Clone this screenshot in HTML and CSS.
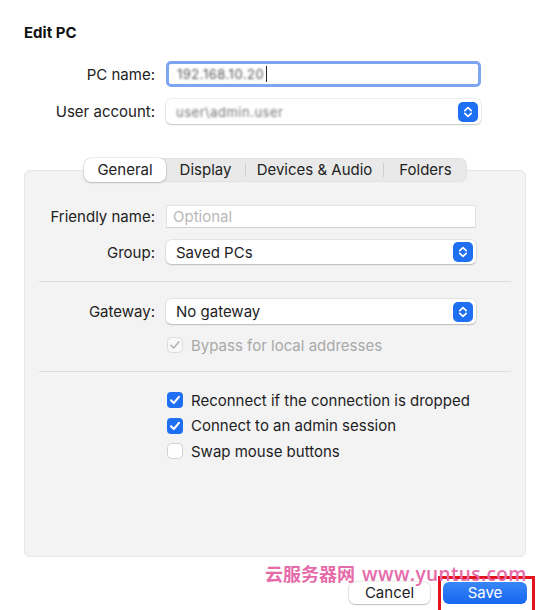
FILE: index.html
```html
<!DOCTYPE html>
<html>
<head>
<meta charset="utf-8">
<link rel="stylesheet" href="styles.css">
</head>
<body>
<div class="dialog">
  <h1 class="title">Edit PC</h1>

  <div class="form top-form">
    <label class="label">PC name:</label>
    <div class="field focused"><span class="blurred">192.168.10.20</span><span class="caret"></span></div>

    <label class="label">User account:</label>
    <div class="select"><span class="blurred light">user\admin.user</span>
      <svg class="stepper" width="20" height="20" viewBox="0 0 20 20"><rect x="0" y="0" width="20" height="20" rx="5" fill="#1f6ff2"/><path d="M6.8 8.6 L10 5.6 L13.2 8.6 M6.8 11.4 L10 14.4 L13.2 11.4" fill="none" stroke="#fff" stroke-width="1.7" stroke-linecap="round" stroke-linejoin="round"/></svg>
    </div>
  </div>

  <div class="tabs">
    <span class="tab active">General</span>
    <span class="tab">Display</span>
    <span class="sep-v"></span>
    <span class="tab">Devices &amp; Audio</span>
    <span class="sep-v"></span>
    <span class="tab">Folders</span>
  </div>

  <div class="panel">
    <div class="form panel-form">
      <label class="label">Friendly name:</label>
      <div class="field plain"><span class="placeholder">Optional</span></div>

      <label class="label">Group:</label>
      <div class="select"><span>Saved PCs</span>
        <svg class="stepper" width="20" height="20" viewBox="0 0 20 20"><rect x="0" y="0" width="20" height="20" rx="5" fill="#1f6ff2"/><path d="M6.8 8.6 L10 5.6 L13.2 8.6 M6.8 11.4 L10 14.4 L13.2 11.4" fill="none" stroke="#fff" stroke-width="1.7" stroke-linecap="round" stroke-linejoin="round"/></svg>
      </div>
    </div>

    <div class="divider first"></div>

    <div class="form panel-form">
      <label class="label">Gateway:</label>
      <div class="select gw"><span>No gateway</span>
        <svg class="stepper" width="20" height="20" viewBox="0 0 20 20"><rect x="0" y="0" width="20" height="20" rx="5" fill="#1f6ff2"/><path d="M6.8 8.6 L10 5.6 L13.2 8.6 M6.8 11.4 L10 14.4 L13.2 11.4" fill="none" stroke="#fff" stroke-width="1.7" stroke-linecap="round" stroke-linejoin="round"/></svg>
      </div>
      <span></span>
      <div class="check disabled">
        <svg class="box" width="16" height="16" viewBox="0 0 16 16"><rect x="0.5" y="0.5" width="15" height="15" rx="4" fill="#f8f8f8" stroke="#dcdcdc"/><path d="M4 8.3 L6.8 11 L12 4.8" fill="none" stroke="#b4b4b4" stroke-width="1.6" stroke-linecap="round" stroke-linejoin="round"/></svg>
        <span>Bypass for local addresses</span>
      </div>
    </div>

    <div class="divider second"></div>

    <div class="checks">
      <div class="check">
        <svg class="box" width="16" height="16" viewBox="0 0 16 16"><rect x="0" y="0" width="16" height="16" rx="4" fill="#1f6ff2"/><path d="M4 8.3 L6.8 11 L12 4.8" fill="none" stroke="#fff" stroke-width="2" stroke-linecap="round" stroke-linejoin="round"/></svg>
        <span>Reconnect if the connection is dropped</span>
      </div>
      <div class="check">
        <svg class="box" width="16" height="16" viewBox="0 0 16 16"><rect x="0" y="0" width="16" height="16" rx="4" fill="#1f6ff2"/><path d="M4 8.3 L6.8 11 L12 4.8" fill="none" stroke="#fff" stroke-width="2" stroke-linecap="round" stroke-linejoin="round"/></svg>
        <span>Connect to an admin session</span>
      </div>
      <div class="check">
        <svg class="box" width="16" height="16" viewBox="0 0 16 16"><rect x="0.5" y="0.5" width="15" height="15" rx="4" fill="#fff" stroke="#d2d2d2"/></svg>
        <span>Swap mouse buttons</span>
      </div>
    </div>
  </div>

  <div class="buttons">
    <button class="btn cancel">Cancel</button>
    <button class="btn save">Save</button>
  </div>

  <div class="watermark">云服务器网 <span class="wm-url">www.yuntus.com</span></div>
</div>
</body>
</html>
```

FILE: styles.css
```css
html, body {
  margin: 0;
  padding: 0;
  background: #ffffff;
}

body {
  font-family: Inter, "Noto Sans", "Liberation Sans", sans-serif;
  font-size: 15px;
  color: #1d1d1f;
  width: 550px;
  height: 610px;
  overflow: hidden;
}

.dialog {
  position: relative;
  padding: 23px 24px 0 24px;
  height: 610px;
  box-sizing: border-box;
}

.title {
  margin: 0;
  font-size: 15px;
  font-weight: 700;
  line-height: 20px;
  color: #111;
}

.form {
  display: grid;
  align-items: center;
  column-gap: 11px;
}

.top-form {
  margin-top: 18px;
  grid-template-columns: 131px 315px;
  row-gap: 12px;
}

.label {
  text-align: right;
  color: #222;
  white-space: nowrap;
}

.field {
  box-sizing: border-box;
  background: #fff;
  display: flex;
  align-items: center;
  padding-left: 8px;
}

.field.focused {
  height: 26px;
  border: 3px solid #7ea6f0;
  border-radius: 5px;
}

.field.plain {
  height: 23px;
  border: 1px solid #e2e2e2;
  border-bottom-color: #cfcfcf;
  padding-left: 6px;
}

.placeholder {
  color: #b8b8b8;
}

.blurred {
  color: #555;
  font-size: 13px;
  filter: blur(1.2px);
  letter-spacing: 0.5px;
}

.blurred.light {
  color: #777;
}

.caret {
  display: inline-block;
  width: 1px;
  height: 16px;
  background: #222;
  margin-left: 2px;
}

.select {
  box-sizing: border-box;
  height: 25px;
  background: #fff;
  border-radius: 5px;
  box-shadow: 0 0 0 0.5px rgba(0,0,0,0.12), 0 1px 1.5px rgba(0,0,0,0.18);
  display: flex;
  align-items: center;
  justify-content: space-between;
  padding: 0 3px 0 10px;
}

.panel-form .select {
  height: 24px;
}

.panel-form .select.gw {
  height: 25px;
}

.stepper {
  display: block;
  flex: none;
}

.tabs {
  margin-top: 34px;
  margin-bottom: -12px;
  position: relative;
  z-index: 1;
  display: flex;
  align-items: center;
  width: 383px;
  height: 24px;
  margin-left: 60px;
  background: #e9e9e9;
  border-radius: 7px;
  box-shadow: inset 0 0 0 0.5px rgba(0,0,0,0.06);
}

.tab {
  height: 24px;
  line-height: 24px;
  text-align: center;
  color: #222;
}

.tab:nth-child(1) { width: 82px; }
.tab:nth-child(2) { width: 79px; }
.tab:nth-child(4) { width: 137px; }
.tab:nth-child(6) { flex: 1; }

.tab.active {
  background: #fff;
  border-radius: 7px;
  box-shadow: 0 0 0 0.5px rgba(0,0,0,0.14), 0 1px 2px rgba(0,0,0,0.18);
}

.sep-v {
  width: 1px;
  height: 14px;
  background: #cfcfcf;
}

.panel {
  box-sizing: border-box;
  height: 387px;
  background: #f3f3f3;
  border: 1px solid #e6e6e6;
  border-radius: 6px;
  padding-top: 34px;
}

.panel-form {
  grid-template-columns: 130px 310px;
  row-gap: 12px;
}

.divider {
  height: 1px;
  background: #dcdcdc;
  margin: 0 14px;
}

.divider.first {
  margin-top: 17px;
  margin-bottom: 17px;
}

.divider.second {
  margin-top: 17px;
  margin-bottom: 18px;
}

.check {
  display: flex;
  align-items: center;
  gap: 8px;
  height: 20px;
  padding-left: 1px;
}

.check.disabled {
  color: #a9a9a9;
  height: 18px;
}

.box {
  display: block;
  flex: none;
}

.checks {
  margin-left: 141px;
  display: flex;
  flex-direction: column;
  gap: 5.5px;
}

.buttons {
  display: flex;
  justify-content: flex-end;
  gap: 13px;
  margin-top: 25px;
  margin-right: -1px;
}

.btn {
  font-family: inherit;
  font-size: 15px;
  height: 22px;
  border: none;
  border-radius: 6px;
  padding: 0;
  line-height: 22px;
}

.btn.cancel {
  width: 81px;
  background: #fff;
  color: #1d1d1f;
  box-shadow: 0 0 0 0.5px rgba(0,0,0,0.16), 0 1px 1.5px rgba(0,0,0,0.2);
}

.btn.save {
  position: relative;
  width: 84px;
  background: linear-gradient(#3a86f8, #1666f0);
  color: #fff;
}

.btn.save::after {
  content: "";
  position: absolute;
  left: -5px;
  right: -8px;
  top: -6px;
  bottom: -10px;
  border: 3px solid #e2131c;
  pointer-events: none;
}

.watermark {
  position: absolute;
  left: 265px;
  top: 562px;
  color: #e56ba9;
  font-family: "Noto Sans CJK SC", sans-serif;
  font-weight: 700;
  font-size: 18px;
  line-height: 22px;
  white-space: nowrap;
}

.wm-url {
  font-family: "Open Sans", sans-serif;
  font-weight: 600;
  font-size: 19px;
  letter-spacing: 0.4px;
  margin-left: 3px;
}
```
